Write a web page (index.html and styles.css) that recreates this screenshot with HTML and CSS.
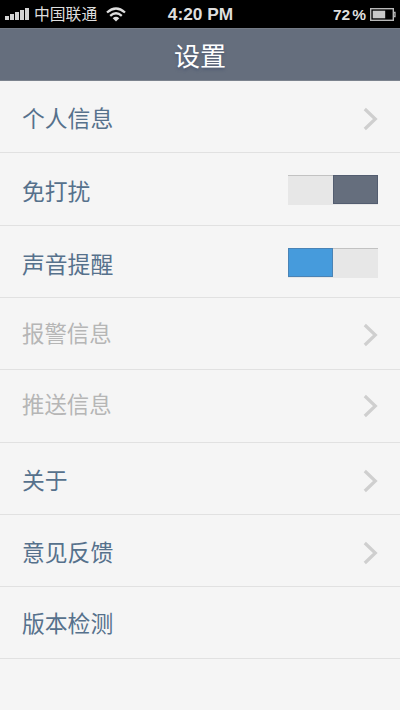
FILE: index.html
```
<!DOCTYPE html>
<html lang="zh-CN">
<head>
<meta charset="utf-8">
<title>设置</title>
<link rel="stylesheet" href="styles.css">
</head>
<body>
<svg class="defs" width="0" height="0"><defs>
<symbol id="chevron" viewBox="0 0 15 24"><path d="M1.8 2 L12.3 12 L1.8 22" fill="none" stroke="#cfcfcf" stroke-width="3.2"/></symbol>
</defs></svg>
<div class="status">
  <div class="carrier">
    <svg class="signal" width="25" height="14" viewBox="0 0 25 14" fill="#d4d4d4"><path d="M0 9h4v4H0zM5 7h4v6H5zM10 5h4v8h-4zM15 3h4v10h-4zM20 1h4v12h-4z"/></svg>
    <span class="operator">中国联通</span>
    <svg class="wifi" width="20" height="15" viewBox="0 0 20 15" fill="none" stroke="#dedede" stroke-width="2.3"><path d="M1 5.5Q10 -2.5 19 5.5M4.2 8.8Q10 3.7 15.8 8.8"/><path d="M6.7 11.2Q10 8.3 13.3 11.2L10 14.4Z" fill="#dedede" stroke="none"/></svg>
  </div>
  <div class="clock">4:20 PM</div>
  <div class="power">
    <span class="percent">72<span class="sign">%</span></span>
    <svg class="battery" width="26" height="13" viewBox="0 0 26 13"><rect x=".7" y=".7" width="22.6" height="11.6" fill="none" stroke="#b8b8b8" stroke-width="1.4"/><rect x="2.7" y="2.7" width="12.5" height="7.6" fill="#c9c9c9"/><path d="M23.5 4.5H25v4h-1.5" fill="none" stroke="#b8b8b8" stroke-width="1.3"/></svg>
  </div>
</div>
<header class="title">设置</header>
<main class="list">
  <div class="row"><span>个人信息</span><svg class="chevron"><use href="#chevron"/></svg></div>
  <div class="row tall"><span>免打扰</span><div class="toggle off"><i></i><i></i></div></div>
  <div class="row sound"><span>声音提醒</span><div class="toggle on"><i></i><i></i></div></div>
  <div class="row muted"><span>报警信息</span><svg class="chevron"><use href="#chevron"/></svg></div>
  <div class="row tall muted raised"><span>推送信息</span><svg class="chevron"><use href="#chevron"/></svg></div>
  <div class="row lower"><span>关于</span><svg class="chevron"><use href="#chevron"/></svg></div>
  <div class="row lower"><span>意见反馈</span><svg class="chevron"><use href="#chevron"/></svg></div>
  <div class="row version"><span>版本检测</span></div>
</main>
</body>
</html>
```
FILE: styles.css
```
* { box-sizing: border-box; }
body {
  margin: 0;
  height: 710px;
  overflow: hidden;
  background: #f5f5f5;
  font-family: "Liberation Sans", "Noto Sans CJK SC", sans-serif;
}
.defs { position: absolute; }
.status {
  height: 28px;
  padding: 0 4px 0 5px;
  display: grid;
  grid-template-columns: 1fr auto 1fr;
  align-items: center;
  background: #000;
  color: #dedede;
}
.carrier { display: flex; align-items: center; }
.operator { margin: 0 9px 0 4px; padding-top: 2px; font-size: 15.8px; line-height: 26px; }
.clock { padding-top: 1px; font-size: 17.3px; font-weight: bold; line-height: 27px; }
.power {
  display: flex;
  align-items: center;
  justify-content: flex-end;
  gap: 4px;
  font-size: 15.5px;
  font-weight: bold;
}
.percent { padding-top: 1px; }
.sign { margin-left: 2px; }
.title {
  height: 53px;
  padding-top: 2px;
  background: #656e7d;
  border-top: 1px solid #747b86;
  border-bottom: 1px solid #7c838e;
  color: #fff;
  font-size: 26px;
  line-height: 52px;
  text-align: center;
  text-shadow: 0 2px 3px #4d5971;
}
.row {
  display: flex;
  align-items: center;
  justify-content: space-between;
  height: 72px;
  padding: 5px 22px 0;
  border-bottom: 1px solid #e1e1e1;
  color: #56718c;
  font-size: 22.8px;
  line-height: 34px;
}
.tall { height: 73px; }
.sound { padding-top: 6px; }
.lower { padding-top: 4px; }
.muted { padding-top: 3px; color: #b6b6b6; font-size: 22.4px; }
.raised { padding-top: 0; }
.version { padding-top: 3px; }
.chevron { width: 15px; height: 24px; }
.toggle {
  display: flex;
  width: 90px;
  height: 30px;
  margin-bottom: 3px;
  background: #e7e7e7;
  border-top: 1px solid #c2c2c2;
}
.toggle i { width: 45px; height: 29px; margin-top: -1px; }
.off i:last-child { background: #656e7d; border: 1px solid #535d70; }
.on i:first-child { background: #469bdc; border: 1px solid #4a83b5; }
```
